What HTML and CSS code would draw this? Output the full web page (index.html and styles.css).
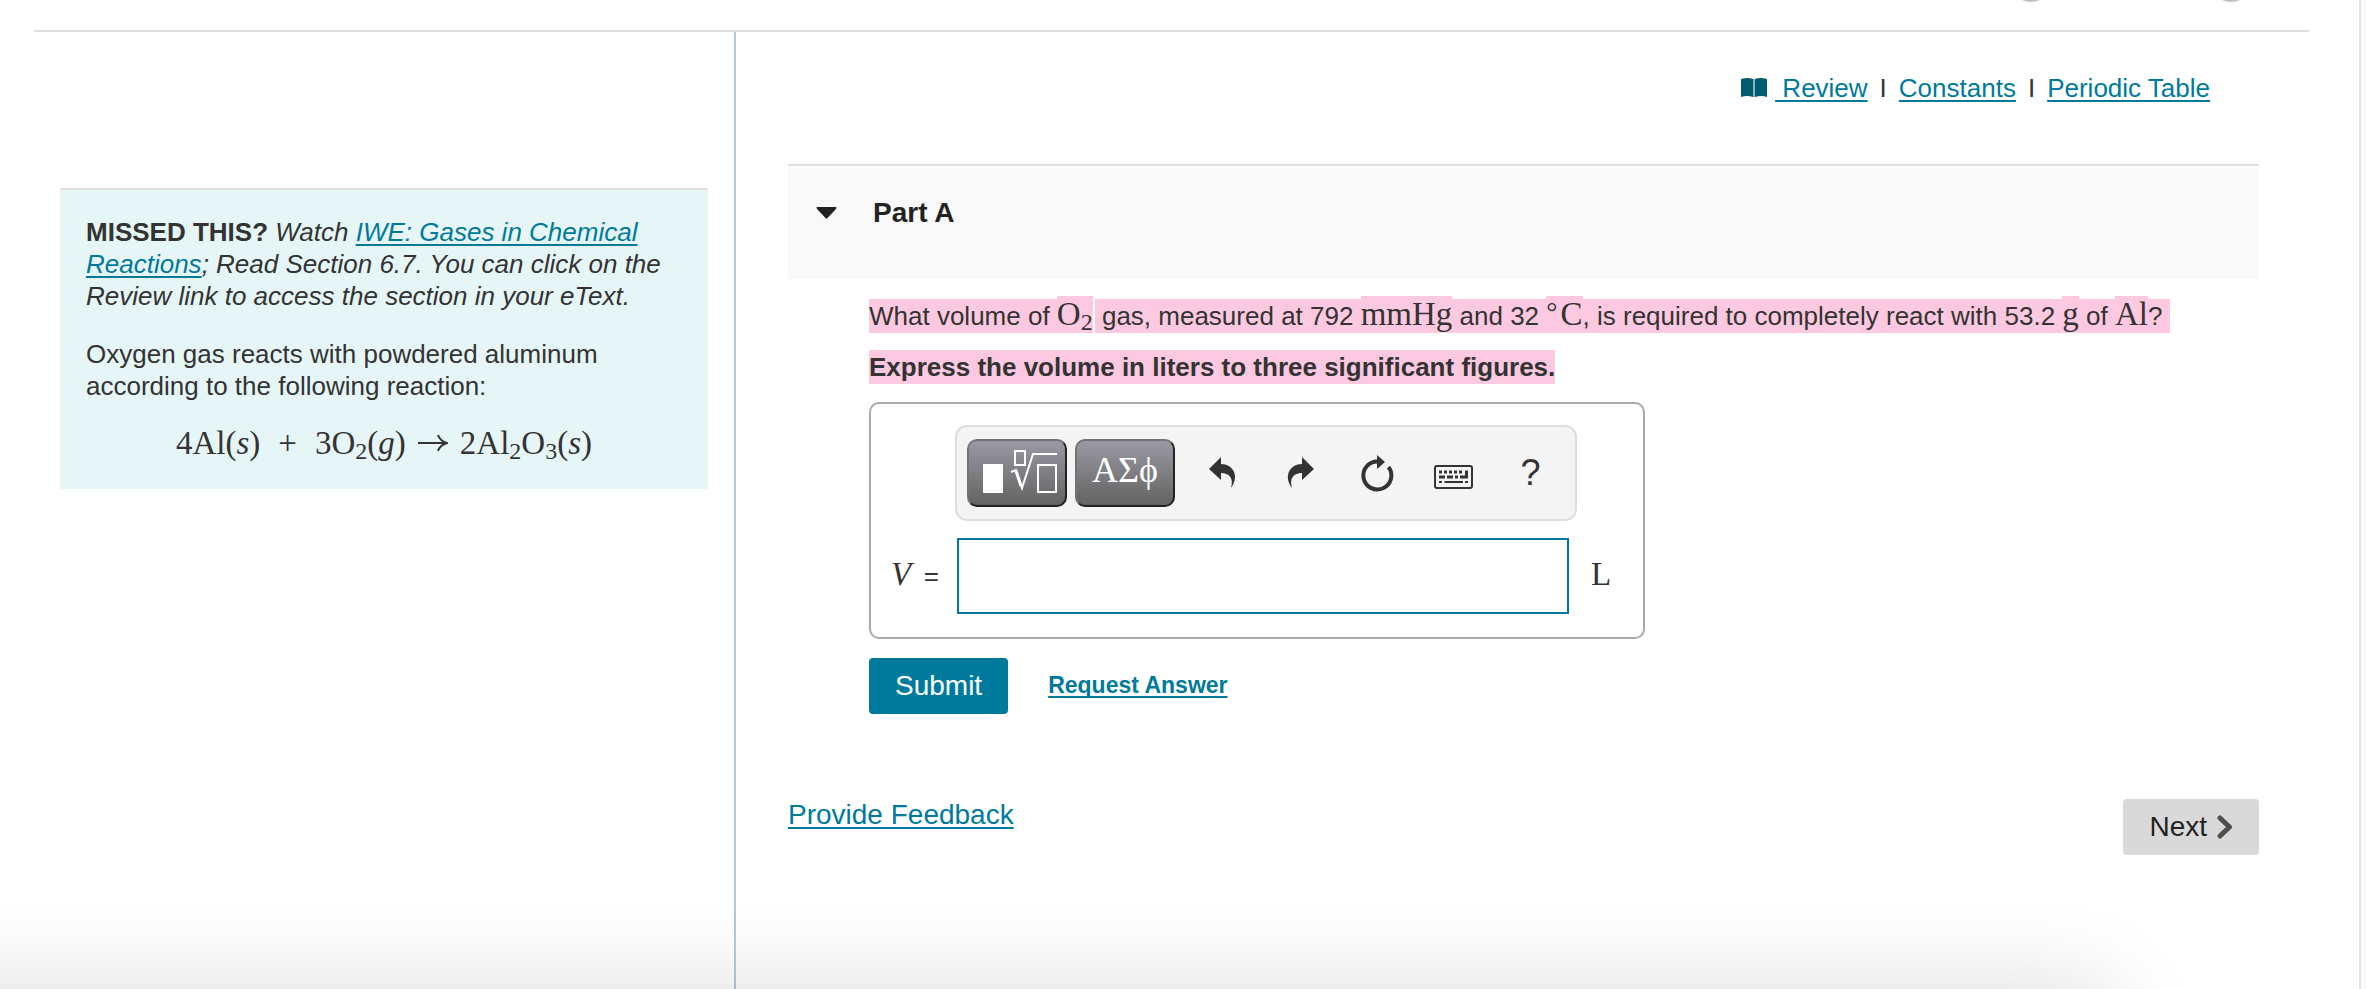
FILE: index.html
```html
<!DOCTYPE html>
<html lang="en">
<head>
<meta charset="utf-8">
<title>Part A</title>
<link rel="stylesheet" href="styles.css">
</head>
<body>
<div class="page">
  <header class="topbar">
    <span class="dot"></span>
    <span class="dot"></span>
  </header>
  <div class="columns">
    <aside class="side">
      <div class="hint">
        <p><b>MISSED THIS?</b> <i>Watch <a href="#">IWE: Gases in Chemical Reactions</a>; Read Section 6.7. You can click on the Review link to access the section in your eText.</i></p>
        <p>Oxygen gas reacts with powdered aluminum according to the following reaction:</p>
        <p class="equation"><span>4Al(<i>s</i>)</span><span class="op">+</span><span>3O<sub>2</sub>(<i>g</i>)</span><svg class="arrow" viewBox="0 0 30 20" aria-label="yields"><path d="M0 10H28M20 2q2 6 9 8q-7 2-9 8" fill="none" stroke="currentColor" stroke-width="2"/></svg><span>2Al<sub>2</sub>O<sub>3</sub>(<i>s</i>)</span></p>
      </div>
    </aside>
    <main class="main">
      <nav class="links">
        <svg class="book" viewBox="0 0 26 20" aria-hidden="true"><path d="M0 1Q7-1 12 1V19Q6 17 0 19ZM14 1Q19-1 26 1V19Q20 17 14 19Z" fill="#005a70"/><path d="M12 1h2v18h-2z" fill="#8fb3bd"/></svg>
        <a href="#">&nbsp;Review</a><span class="sep">I</span><a href="#">Constants</a><span class="sep">I</span><a href="#">Periodic Table</a>
      </nav>
      <button class="part" type="button">
        <svg class="caret" viewBox="0 0 21 12" aria-hidden="true"><path d="M1 0H20Q21 0 20 2L11.500 11Q10.500 12 9.500 11L1 2Q0 0 1 0Z" fill="#222"/></svg>
        <span>Part A</span>
      </button>
      <section class="body">
        <p class="question"><mark>What volume of <span class="math">O<sub>2</sub></span></mark><span class="thin"></span><mark> gas, measured at 792 <span class="math">mmHg</span></mark><mark> and 32 <span class="math"><span class="degree">°</span>C</span>, is required to completely react with 53.2 <span class="math">g</span> of <span class="math">Al</span>?&nbsp;</mark></p>
        <p class="instruction"><mark>Express the volume in liters to three significant figures.</mark></p>
        <form class="answer">
          <div class="toolbar">
            <button class="tool dark" type="button" aria-label="Templates">
              <svg width="76" height="44" viewBox="0 0 76 44" fill="none" stroke="#fff" stroke-width="2"><path d="M4 14H24V43H4Z" fill="#fff" stroke="none"/><path d="M36 1H46V15H36ZM59 15H77V42H59Z"/><path d="M32 22L37 20L43 38L54 4H78"/><path d="M37 21L42 36" stroke-width="3"/></svg>
            </button>
            <button class="tool dark greek" type="button">ΑΣϕ</button>
            <div class="actions">
              <button class="tool" type="button" aria-label="Undo"><svg width="28" height="32" viewBox="0 0 28 32"><path d="M0 12L12 0V7C24 7 31 19 22 31C25 21 20 16 12 16V23Z" fill="#333"/></svg></button>
              <button class="tool" type="button" aria-label="Redo"><svg width="28" height="32" viewBox="0 0 28 32"><path d="M28 12L16 0V7C4 7-3 19 6 31C3 21 8 16 16 16V23Z" fill="#333"/></svg></button>
              <button class="tool" type="button" aria-label="Reset"><svg width="32" height="36" viewBox="0 0 32 36"><path d="M17 6.500A14 14 0 1 0 27.500 12" fill="none" stroke="#333" stroke-width="4"/><path d="M16 0L24 7L16 14Z" fill="#333"/></svg></button>
              <button class="tool low" type="button" aria-label="Keyboard shortcuts"><svg width="39" height="24" viewBox="0 0 39 24"><rect x="1" y="1" width="37" height="22" rx="2" fill="none" stroke="#333" stroke-width="2"/><path d="M5 7H30" fill="none" stroke="#333" stroke-width="3" stroke-dasharray="3 2"/><path d="M5 12H11M13 12H28" stroke="#333" stroke-width="3" stroke-dasharray="6 2 3 2 3 2 3 2"/><path d="M31 5.500H34V13.500H28V10.500H31Z" fill="#333"/><path d="M5 17H8M10.500 17H29M31 17H34" stroke="#333" stroke-width="2"/></svg></button>
              <button class="tool help" type="button" aria-label="Help">?</button>
            </div>
          </div>
          <div class="entry">
            <label for="volume"><i>V</i> <span class="eq">=</span></label>
            <input id="volume" type="text">
            <span class="unit">L</span>
          </div>
        </form>
        <div class="submit-row">
          <button class="btn primary" type="button">Submit</button>
          <a class="request" href="#">Request Answer</a>
        </div>
      </section>
      <footer class="foot">
        <a href="#">Provide Feedback</a>
        <button class="btn next" type="button">Next <svg width="16" height="24" viewBox="0 0 16 24" aria-hidden="true"><path d="M3 3L12.500 12L3 21" fill="none" stroke="#4f4f4f" stroke-width="5" stroke-linecap="round" stroke-linejoin="round"/></svg></button>
      </footer>
    </main>
  </div>
</div>
<div class="shade"></div>
</body>
</html>
```
FILE: styles.css
```css
* { box-sizing: border-box; }

body {
  margin: 0;
  background: #fafafa;
  color: #333;
  font-family: "Liberation Sans", Arial, sans-serif;
  font-size: 26px;
  line-height: 32px;
  overflow: hidden;
}

p { margin: 0; }
a { color: #007a9c; text-decoration: underline; text-decoration-thickness: 2px; text-underline-offset: 3px; text-decoration-skip-ink: none; }
button { font: inherit; color: inherit; border: 0; background: none; padding: 0; cursor: pointer; }

.page {
  min-height: 100vh;
  margin-right: 6px;
  padding: 0 50px 0 34px;
  background: #fff;
  border-right: 2px solid #e6e6e6;
  display: flex;
  flex-direction: column;
}

.topbar {
  height: 32px;
  border-bottom: 2px solid #dfdfdf;
  display: flex;
  justify-content: flex-end;
  gap: 160px;
  padding-right: 58px;
  overflow: hidden;
}
.dot {
  width: 40px;
  height: 40px;
  margin-top: -38px;
  border-radius: 50%;
  background: #c4c4c4;
}

.columns {
  flex: 1;
  display: grid;
  grid-template-columns: 700px 1fr;
}

.side { padding: 156px 26px 0; }
.hint {
  background: #e6f6f7;
  border-top: 2px solid #dfdfdf;
  padding: 26px 26px 30px;
}
.hint p + p { margin-top: 26px; }
.hint p.equation {
  display: flex;
  justify-content: center;
  align-items: center;
  margin-top: 25px;
}

.equation, .math, .greek, .entry label, .unit {
  font-family: "Liberation Serif", "Times New Roman", serif;
  font-size: 33px;
}
sub { font-size: 24px; line-height: 0; vertical-align: -5px; }
.op { margin: 0 18px; }
.arrow { width: 30px; height: 20px; margin: 0 12px; }

.main {
  border-left: 2px solid #b9c9d6;
  padding: 40px 50px 0 52px;
}

.links {
  display: flex;
  justify-content: flex-end;
  align-items: center;
  padding-right: 49px;
}
.book { width: 26px; height: 20px; margin-right: 8px; }
.sep { margin: 0 12px; }

.part {
  display: flex;
  align-items: center;
  gap: 36px;
  width: 100%;
  margin-top: 60px;
  padding: 31px 28px 50px;
  background: #f9f9f9;
  border-top: 2px solid #dfdfdf;
  color: #222;
  font-size: 28px;
  font-weight: bold;
}
.caret { width: 21px; height: 12px; }

.body { padding: 17px 0 0 81px; }
mark { background: #fdc9e0; color: inherit; padding: 2px 0; }
.question { line-height: 36px; }
.math { background: #fdc9e0; }
.thin { padding-left: 2px; }
.degree { margin-right: 3px; font-size: 28px; line-height: 0; vertical-align: 4px; }
.instruction { margin-top: 17px; font-weight: bold; }

.answer {
  width: fit-content;
  margin: 19px 0 0;
  padding: 21px 52px 23px 20px;
  border: 2px solid #aaa;
  border-radius: 10px;
}
.toolbar {
  display: flex;
  align-items: center;
  gap: 8px;
  width: 622px;
  height: 96px;
  margin-left: 64px;
  padding: 0 6px 0 10px;
  background: #f4f4f4;
  border: 2px solid #ddd;
  border-radius: 12px;
}
.tool { display: grid; place-items: center; }
.tool svg { overflow: visible; }
.dark {
  width: 100px;
  height: 68px;
  padding-bottom: 2px;
  color: #fff;
  background: linear-gradient(#9a99a3, #636363);
  border: 2px solid;
  border-color: #737373 #222 #222 #737373;
  border-radius: 10px;
}
.greek { padding-bottom: 6px; font-size: 36px; }
.actions {
  flex: 1;
  display: grid;
  grid-template-columns: repeat(5, 1fr);
  padding-left: 2px;
}
.low { padding-top: 8px; }
.help { font-size: 36px; }

.entry {
  display: flex;
  align-items: center;
  margin-top: 17px;
}
.entry label {
  display: flex;
  justify-content: space-between;
  align-items: baseline;
  width: 66px;
  padding: 0 18px 2px 0;
}
.eq { font-family: "Liberation Sans", Arial, sans-serif; font-size: 26px; }
.entry input {
  width: 612px;
  height: 76px;
  padding: 0 12px;
  border: 2px solid #007a9c;
  background: #fff;
  font: inherit;
}
.unit { width: 0; padding: 0 0 4px 22px; }

.submit-row {
  display: flex;
  align-items: center;
  gap: 40px;
  margin-top: 19px;
}
.btn { height: 56px; border-radius: 4px; padding: 0 26px; font-size: 28px; }
.primary { background: #007a9c; color: #fff; }
.request { padding-bottom: 2px; font-size: 23px; font-weight: bold; }

.foot {
  display: flex;
  justify-content: space-between;
  align-items: flex-start;
  margin-top: 85px;
  font-size: 28px;
}
.next { background: #d9d9d9; color: #222; display: flex; align-items: center; gap: 10px; }

.shade {
  position: fixed;
  left: -200px;
  right: 256px;
  top: 100%;
  height: 300px;
  box-shadow: 0 0 90px rgba(0, 0, 0, 0.14);
  pointer-events: none;
}
```
